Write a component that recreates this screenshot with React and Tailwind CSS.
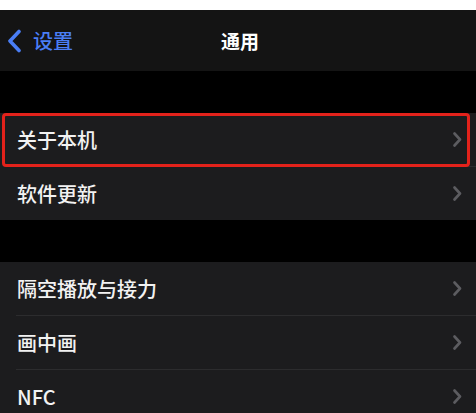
import React from "react";

const font = { fontFamily: '"Noto Sans CJK SC", "Noto Sans", sans-serif' };

function Chevron() {
  return (
    <svg width="9" height="15" viewBox="0 0 9 15" className="shrink-0">
      <path d="M1.5 1.5 L7 7.5 L1.5 13.5" fill="none" stroke="#5c5c60" strokeWidth="2.6" strokeLinecap="round" strokeLinejoin="round" />
    </svg>
  );
}

function Row({ label, last }) {
  return (
    <div className="bg-[#1c1c1e]">
      <div className="h-[53px] flex items-center justify-between pl-[17px] pr-[14px]">
        <span className="text-[20px] font-medium text-[#f2f2f2] leading-none">{label}</span>
        <Chevron />
      </div>
      {!last && <div className="ml-[16px] h-px bg-[#2c2c2e]" />}
    </div>
  );
}

export default function App() {
  return (
    <div className="w-[476px] h-[413px] overflow-hidden bg-black" style={font}>
      <div className="h-[10px] bg-white" />
      <div className="h-[61px] bg-[#141414] relative flex items-center">
        <div className="flex items-center pl-[7px] gap-[11px] text-[#4a7ef5]">
          <svg width="15" height="24" viewBox="0 0 15 24">
            <path d="M12 2.5 L3 12 L12 21.5" fill="none" stroke="#4a7ef5" strokeWidth="3.6" strokeLinecap="round" strokeLinejoin="round" />
          </svg>
          <span className="text-[20px] font-medium leading-none">设置</span>
        </div>
        <span className="absolute left-[221px] text-[19px] font-semibold text-white leading-none">通用</span>
      </div>
      <div className="h-[42px]" />
      <div className="relative">
        <Row label="关于本机" />
        <Row label="软件更新" last />
        <div className="absolute left-[2px] top-0 w-[468px] h-[54px] border-[3px] border-[#e3221b] rounded-[4px]" />
      </div>
      <div className="h-[42px]" />
      <Row label="隔空播放与接力" />
      <Row label="画中画" />
      <Row label="NFC" last />
    </div>
  );
}
